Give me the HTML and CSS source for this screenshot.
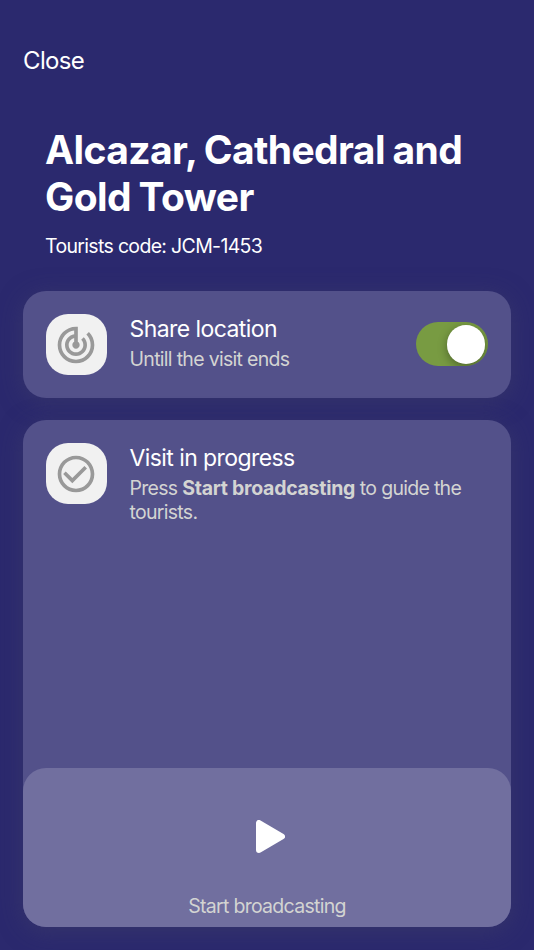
FILE: index.html
```html
<!DOCTYPE html>
<html lang="en">
<head>
  <meta charset="UTF-8" />
  <meta name="viewport" content="width=device-width, initial-scale=1.0" />
  <title>Visit</title>
  <link rel="stylesheet" href="styles.css">
</head>
<body>

<header>
  <button class="btn-close" type="button">Close</button>
  <h1>Alcazar, Cathedral and Gold Tower</h1>
  <p class="code">Tourists code: JCM-1453</p>
</header>

<main>
  <section class="card">
    <div class="card-row">
      <div class="icon-box">
        <svg viewBox="0 0 24 24">
          <path d="M19.07 4.93l-1.41 1.41C19.1 7.79 20 9.79 20 12c0 4.42-3.58 8-8 8s-8-3.58-8-8c0-4.08 3.05-7.44 7-7.93v2.02C8.16 6.57 6 9.03 6 12c0 3.31 2.69 6 6 6s6-2.69 6-6c0-1.66-.67-3.16-1.76-4.24l-1.41 1.41C15.55 9.9 16 10.9 16 12c0 2.21-1.79 4-4 4s-4-1.79-4-4c0-1.86 1.28-3.41 3-3.86v2.14c-.6.35-1 .98-1 1.72 0 1.1.9 2 2 2s2-.9 2-2c0-.74-.4-1.38-1-1.72V2h-1C6.48 2 2 6.48 2 12s4.48 10 10 10 10-4.48 10-10c0-2.76-1.12-5.26-2.93-7.07z"/>
        </svg>
      </div>
      <div class="card-text">
        <h2>Share location</h2>
        <p>Untill the visit ends</p>
      </div>
      <button class="switch" type="button" role="switch" aria-checked="true" aria-label="Share location">
        <span class="knob"></span>
      </button>
    </div>
  </section>

  <section class="card visit">
    <div class="card-row">
      <div class="icon-box">
        <svg viewBox="0 0 24 24">
          <path d="M16.59 7.58L10 14.17l-3.59-3.58L5 12l5 5 8-8zM12 2C6.48 2 2 6.48 2 12s4.48 10 10 10 10-4.48 10-10S17.52 2 12 2zm0 18c-4.42 0-8-3.58-8-8s3.58-8 8-8 8 3.58 8 8-3.58 8-8 8z"/>
        </svg>
      </div>
      <div class="card-text">
        <h2>Visit in progress</h2>
        <p>Press <strong>Start broadcasting</strong> to guide the tourists.</p>
      </div>
    </div>

    <button class="broadcast" type="button">
      <svg class="play" viewBox="0 0 29 33">
        <path d="M3 3v27L26 16.5z"/>
      </svg>
      <span>Start broadcasting</span>
    </button>
  </section>
</main>

</body>
</html>
```

FILE: styles.css
```css
* {
  box-sizing: border-box;
}
body {
  margin: 0;
  height: 100vh;
  padding: 46px 23px 23px;
  display: flex;
  flex-direction: column;
  font-family: Inter, 'Liberation Sans', sans-serif;
  background: #2b296e;
  color: white;
  overflow: hidden;
}
button {
  font-family: inherit;
  color: inherit;
  border: none;
  background: none;
  padding: 0;
  cursor: pointer;
}
.btn-close {
  display: block;
  font-size: 24px;
  line-height: 30px;
  letter-spacing: -0.65px;
}
h1 {
  margin: 50px 0 0 22px;
  font-size: 39px;
  line-height: 47px;
  font-weight: 700;
  letter-spacing: -0.6px;
  word-spacing: -1px;
}
.code {
  margin: 14px 0 0 22px;
  font-size: 19.5px;
  line-height: 24px;
  letter-spacing: -0.67px;
}
main {
  flex: 1;
  display: flex;
  flex-direction: column;
  gap: 22.5px;
  margin-top: 33px;
}
.card {
  border-radius: 23px;
  background: #53518a;
  box-shadow: 0 4px 23px rgba(65, 65, 105, 0.5);
}
.card-row {
  display: flex;
  align-items: flex-start;
  gap: 23px;
  padding: 23px 23px 22.5px 22.5px;
}
.icon-box {
  flex: none;
  width: 61px;
  height: 61px;
  border-radius: 22px;
  background: #f1f1f1;
  display: flex;
  justify-content: center;
  align-items: center;
}
.icon-box svg {
  width: 44px;
  height: 44px;
  fill: #999;
}
.card-text {
  flex: 1;
}
.card-text h2 {
  margin: 0;
  font-size: 23px;
  line-height: 31px;
  font-weight: 400;
  letter-spacing: -0.58px;
}
.card-text p {
  margin: 2px 0 0;
  font-size: 19.5px;
  line-height: 24px;
  letter-spacing: -0.7px;
  color: #d3d4d2;
}
.card-text strong {
  font-weight: 700;
  letter-spacing: -0.27px;
}
.switch {
  flex: none;
  width: 72.5px;
  height: 44px;
  margin-top: 8px;
  padding: 3px;
  border-radius: 22px;
  background: #789b42;
  display: flex;
  justify-content: flex-end;
  overflow: hidden;
}
.knob {
  width: 38.5px;
  height: 38.5px;
  border-radius: 50%;
  background: white;
  box-shadow: 0 3px 10px rgba(0, 0, 0, 0.35);
}
.visit {
  flex: 1;
  display: flex;
  flex-direction: column;
}
.broadcast {
  margin-top: auto;
  height: 159px;
  padding: 52px 0 9px;
  border-radius: 23px;
  background: #716f9f;
  display: flex;
  flex-direction: column;
  align-items: center;
  justify-content: space-between;
}
.play {
  width: 29px;
  height: 33px;
  margin-left: 6px;
  fill: white;
  stroke: white;
  stroke-width: 6;
  stroke-linejoin: round;
}
.broadcast span {
  font-size: 19.5px;
  line-height: 24px;
  letter-spacing: -0.72px;
  color: #d3d4d2;
}
```
